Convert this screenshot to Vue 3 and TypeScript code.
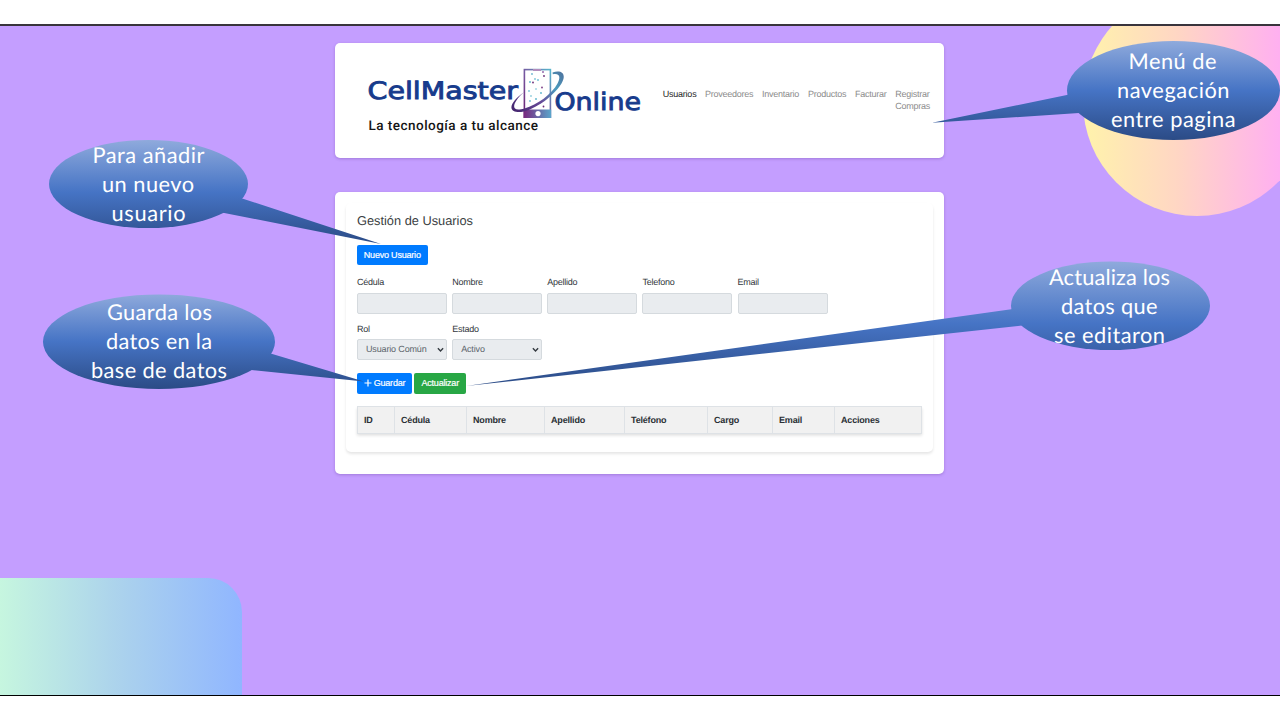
<script setup lang="ts">
interface NavItem { label: string; width: number; active?: boolean }
interface Column { label: string; width: number }
interface Line { text: string; x: number; y: number; w: number }
interface Callout {
  id: string
  cx: number; cy: number; rx: number; ry: number
  tail: string
  top: number; bottom: number
  lines: Line[]
}

const nav: NavItem[] = [
  { label: 'Usuarios', width: 42.2, active: true },
  { label: 'Proveedores', width: 57 },
  { label: 'Inventario', width: 46 },
  { label: 'Productos', width: 47 },
  { label: 'Facturar', width: 40.3 },
  { label: 'Registrar Compras', width: 38 },
]
const fields: string[] = ['Cédula', 'Nombre', 'Apellido', 'Telefono', 'Email']
const selects = [
  { label: 'Rol', value: 'Usuario Común' },
  { label: 'Estado', value: 'Activo' },
]
const columns: Column[] = [
  { label: 'ID', width: 37 },
  { label: 'Cédula', width: 72 },
  { label: 'Nombre', width: 78 },
  { label: 'Apellido', width: 80 },
  { label: 'Teléfono', width: 83 },
  { label: 'Cargo', width: 65 },
  { label: 'Email', width: 62 },
  { label: 'Acciones', width: 88 },
]
const callouts: Callout[] = [
  {
    id: 'nuevo', cx: 148.5, cy: 184, rx: 99.5, ry: 44, top: 140, bottom: 244,
    tail: '235,196 243,198.7 381,244 223,212.7 215,205',
    lines: [
      { text: 'Para añadir', x: 92.5, y: 163, w: 112 },
      { text: 'un nuevo', x: 102, y: 192, w: 92 },
      { text: 'usuario', x: 111.5, y: 221, w: 74 },
    ],
  },
  {
    id: 'guardar', cx: 159, cy: 341.7, rx: 116, ry: 47.3, top: 294, bottom: 389,
    tail: '260,350 271.5,353.7 364,381.5 251.5,370 240,362',
    lines: [
      { text: 'Guarda los', x: 107, y: 320, w: 105 },
      { text: 'datos en la', x: 106, y: 349, w: 106 },
      { text: 'base de datos', x: 91, y: 378, w: 136 },
    ],
  },
  {
    id: 'actualizar', cx: 1110.5, cy: 305.7, rx: 99.5, ry: 44.3, top: 261, bottom: 386,
    tail: '1030,307 1013,309 466,386 1022,325.5 1035,320',
    lines: [
      { text: 'Actualiza los', x: 1049, y: 285, w: 121 },
      { text: 'datos que', x: 1061, y: 314, w: 96.5 },
      { text: 'se editaron', x: 1054, y: 343, w: 111 },
    ],
  },
  {
    id: 'menu', cx: 1173.5, cy: 90.5, rx: 106.5, ry: 49.5, top: 41, bottom: 140,
    tail: '1080,92 1068,94.8 932,122.7 1079,113 1090,105',
    lines: [
      { text: 'Menú de', x: 1128.5, y: 69, w: 88 },
      { text: 'navegación', x: 1117, y: 98.3, w: 112.5 },
      { text: 'entre pagina', x: 1111, y: 127.3, w: 124.5 },
    ],
  },
]
const dots = [
  [532, 74, '#6db7cf'], [543, 72, '#8b5ba5'], [535, 79, '#79c3d8'], [544, 76, '#6b2c77'],
  [530, 82, '#5ab4cb'], [538, 80, '#69bdd4'], [533, 82.5, '#6b2c77'], [542, 87.5, '#7a3a83'],
  [529, 91, '#79c3d8'], [536, 89, '#9ad3e2'], [541, 93, '#5ab4cb'], [531, 96, '#8fcddd'],
  [536, 99, '#5ab4cb'], [530, 101, '#69bdd4'], [540, 103, '#9ad3e2'], [543.5, 106.5, '#6b2c77'],
] as const
</script>

<template>
  <div class="slide">
    <main class="stage">
      <div class="circle"></div>
      <div class="corner"></div>

      <header class="card header">
        <svg class="logo" viewBox="360 60 290 80" width="290" height="80">
          <defs>
            <linearGradient id="phone" x1="0" y1="1" x2="1" y2="0">
              <stop offset="0" stop-color="#6b2173" />
              <stop offset=".45" stop-color="#77559f" />
              <stop offset="1" stop-color="#58b5cc" />
            </linearGradient>
            <linearGradient id="home" x1="0" y1="0" x2="1" y2="0">
              <stop offset="0" stop-color="#78277e" />
              <stop offset="1" stop-color="#5aa6cb" />
            </linearGradient>
            <linearGradient id="orbit" gradientUnits="userSpaceOnUse" x1="511" y1="110" x2="564" y2="72">
              <stop offset="0" stop-color="#43246d" />
              <stop offset=".45" stop-color="#674a98" />
              <stop offset=".75" stop-color="#4b9bbd" />
              <stop offset="1" stop-color="#4e719d" />
            </linearGradient>
          </defs>
          <text class="brand" x="367.5" y="99.3" textLength="150.5" lengthAdjust="spacingAndGlyphs">CellMaster</text>
          <text class="brand" x="554.5" y="110.4" textLength="86.5" lengthAdjust="spacingAndGlyphs">Online</text>
          <text class="tagline" x="368.5" y="130.3" textLength="169.5" lengthAdjust="spacing">La tecnología a tu alcance</text>
          <rect x="524.4" y="69.6" width="26" height="47.6" fill="#fff" stroke="url(#phone)" stroke-width="1.6" />
          <rect x="523.6" y="109.5" width="27.6" height="8.5" fill="url(#home)" />
          <rect x="533" y="69" width="8" height="2" fill="#b18dbd" />
          <circle v-for="(d, i) in dots" :key="i" :cx="d[0]" :cy="d[1]" r=".9" :fill="d[2]" />
          <circle cx="538" cy="113.6" r="2.6" fill="#fff" />
          <path d="M524.5 108.5 C537 105 552 94 557.5 83.5 C561 76.5 559.5 73 552.8 74.2 L552.5 72.4 C563 69.5 566.5 75 561.5 83.5 C552 98.5 530 113 517.5 112 C506.5 111 511.5 100.5 524 92.2 C515.5 99.5 512.5 106 515 108.6 C516.6 110 520 109.7 524.5 108.5Z" fill="url(#orbit)" />
        </svg>
        <nav class="nav">
          <a v-for="n in nav" :key="n.label" :class="{ active: n.active }" :style="{ width: n.width + 'px' }">{{ n.label }}</a>
        </nav>
      </header>

      <section class="card content">
        <div class="panel">
          <h1>Gestión de Usuarios</h1>
          <button class="btn primary new">Nuevo Usuario</button>
          <div class="row">
            <label v-for="f in fields" :key="f">{{ f }}<input disabled type="text" /></label>
          </div>
          <div class="row second">
            <label v-for="s in selects" :key="s.label">{{ s.label }}
              <span class="select">{{ s.value }}
                <svg viewBox="0 0 8 6" width="7" height="5.5"><path d="M1 1.3 4 4.3 7 1.3" fill="none" stroke="#343a40" stroke-width="1.6" /></svg>
              </span>
            </label>
          </div>
          <div class="actions">
            <button class="btn primary save">
              <svg viewBox="0 0 8 8" width="8" height="8"><path d="M4 .5V7.5M.5 4H7.5" stroke="#fff" stroke-width="1.2" /></svg>Guardar
            </button>
            <button class="btn success">Actualizar</button>
          </div>
          <div class="table">
            <div v-for="c in columns" :key="c.label" class="th" :style="{ width: c.width + 'px' }">{{ c.label }}</div>
          </div>
        </div>
      </section>
    </main>

    <svg class="callouts" viewBox="0 0 1280 720" width="1280" height="720">
      <defs>
        <linearGradient v-for="c in callouts" :id="'g-' + c.id" :key="c.id" gradientUnits="userSpaceOnUse" x1="0" x2="0" :y1="c.top" :y2="c.bottom">
          <stop offset="0" stop-color="#8faadc" />
          <stop offset=".5" stop-color="#4674c5" />
          <stop offset="1" stop-color="#2b4b86" />
        </linearGradient>
      </defs>
      <g v-for="c in callouts" :key="c.id">
        <polygon :points="c.tail" :fill="`url(#g-${c.id})`" />
        <ellipse :cx="c.cx" :cy="c.cy" :rx="c.rx" :ry="c.ry" :fill="`url(#g-${c.id})`" />
        <text v-for="l in c.lines" :key="l.text" :x="l.x" :y="l.y" :textLength="l.w" lengthAdjust="spacing">{{ l.text }}</text>
      </g>
    </svg>
  </div>
</template>

<style>
body { margin: 0; background: #fff; }
</style>

<style scoped>
* { box-sizing: border-box; }
.slide {
  position: relative;
  width: 1280px;
  height: 720px;
  padding-top: 24px;
  background: #fff;
  overflow: hidden;
  font-family: "Liberation Sans", Arial, sans-serif;
  font-size: 9px;
  letter-spacing: -.24px;
  text-rendering: geometricPrecision;
}
.stage {
  position: relative;
  height: 672px;
  padding: 16.5px 0 0 335px;
  border-top: 2px solid #39343c;
  border-bottom: 1px solid #000;
  background: #c49eff;
  overflow: hidden;
}
.circle {
  position: absolute;
  left: 1083px;
  top: -38px;
  width: 228px;
  height: 228px;
  border-radius: 50%;
  background: linear-gradient(90deg, #fff3ab 0, #ffd5c5 98px, #ffb0f0 196px);
}
.corner {
  position: absolute;
  left: 0;
  bottom: 0;
  width: 242px;
  height: 117.5px;
  border-radius: 0 34px 0 0;
  background: linear-gradient(90deg, #c6f6df, #acd3ec 48%, #90b6ff);
}
.card {
  position: relative;
  width: 609px;
  background: #fff;
  border-radius: 5px;
  box-shadow: 0 1px 3px rgba(60, 20, 110, .25);
}
.header {
  display: flex;
  height: 115.5px;
  padding: 17.5px 0 0 25px;
}
.logo { flex: none; display: block; letter-spacing: 0; }
.brand {
  font-family: "DejaVu Sans", sans-serif;
  font-size: 24px;
  fill: #173b8c;
  stroke: #173b8c;
  stroke-width: .9px;
}
.tagline { font-family: Roboto, sans-serif; font-size: 13.5px; font-weight: 500; fill: #151515; }
.nav {
  display: flex;
  align-items: flex-start;
  padding: 27.5px 0 0 12.8px;
  line-height: 12.75px;
  color: #8c8c8c;
}
.nav a { flex: none; }
.nav .active { color: #262626; }
.content {
  height: 281.5px;
  margin-top: 34px;
  padding: 10.5px 11px 0 11px;
}
.panel {
  height: 249.5px;
  padding: 8.5px 11px 0 11px;
  border-radius: 5px;
  box-shadow: 0 2px 3px rgba(0, 0, 0, .1);
}
h1 {
  margin: 0;
  font-size: 12.8px;
  line-height: 20px;
  font-weight: 400;
  letter-spacing: 0;
  color: #3b3f43;
}
.btn {
  display: inline-flex;
  align-items: center;
  justify-content: center;
  height: 20.5px;
  padding: 0;
  border: 0;
  border-radius: 2px;
  font: inherit;
  letter-spacing: -.2px;
  color: #fff;
  -webkit-text-stroke: .2px #fff;
}
.primary { background: #007bff; }
.success { width: 51.8px; background: #28a745; }
.new { display: flex; width: 70.5px; margin-top: 13.5px; }
.row {
  display: flex;
  gap: 5.15px;
  margin-top: 11px;
}
.row.second { margin-top: 9px; }
label {
  display: block;
  width: 90px;
  line-height: 13px;
  color: #33383d;
}
input, .select {
  display: flex;
  width: 100%;
  height: 21px;
  margin-top: 3.5px;
  border: 1px solid #d5dade;
  border-radius: 2px;
  background: #e9ecef;
}
.select {
  align-items: center;
  justify-content: space-between;
  padding: 0 2.5px 0 8px;
  color: #5c646b;
  letter-spacing: -.15px;
}
.actions { display: flex; gap: 2.3px; margin-top: 13px; }
.save { width: 55px; gap: 2px; }
.table {
  display: flex;
  width: 565px;
  height: 28px;
  margin-top: 12.5px;
  border: 1px solid #dee2e6;
  border-right: 0;
  background: #f1f1f1;
  box-shadow: 0 1.5px 3px rgba(0, 0, 0, .13);
}
.th {
  flex: none;
  padding-left: 6px;
  border-right: 1px solid #dee2e6;
  font-weight: 700;
  font-size: 9px;
  line-height: 26px;
  letter-spacing: -.18px;
  color: #2b3035;
}
.th:last-child { flex: 1; }
.callouts {
  position: absolute;
  left: 0;
  top: 0;
  letter-spacing: 0;
  pointer-events: none;
}
.callouts text { font-family: Lato, sans-serif; font-size: 21.8px; fill: #fff; }
</style>
